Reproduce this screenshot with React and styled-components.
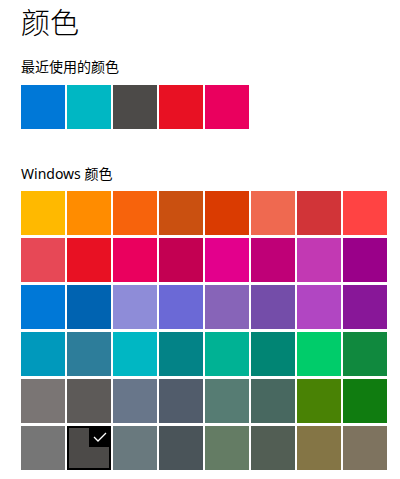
import styled, { createGlobalStyle } from "styled-components";

const GlobalStyle = createGlobalStyle`
  html, body {
    margin: 0;
    padding: 0;
    background: #ffffff;
  }
  body {
    font-family: "Noto Sans", "Noto Sans CJK SC", sans-serif;
    color: #000000;
  }
`;

const recentColors = ["#0078D7", "#00B7C3", "#4C4A48", "#E81123", "#EA005E"];

const windowsColors = [
  "#FFB900", "#FF8C00", "#F7630C", "#CA5010", "#DA3B01", "#EF6950", "#D13438", "#FF4343",
  "#E74856", "#E81123", "#EA005E", "#C30052", "#E3008C", "#BF0077", "#C239B3", "#9A0089",
  "#0078D7", "#0063B1", "#8E8CD8", "#6B69D6", "#8764B8", "#744DA9", "#B146C2", "#881798",
  "#0099BC", "#2D7D9A", "#00B7C3", "#038387", "#00B294", "#018574", "#00CC6A", "#10893E",
  "#7A7574", "#5D5A58", "#68768A", "#515C6B", "#567C73", "#486860", "#498205", "#107C10",
  "#767676", "#4C4A48", "#69797E", "#4A5459", "#647C64", "#525E54", "#847545", "#7E735F",
];

const SELECTED = 41;

const App = () => {
  return (
    <Page>
      <GlobalStyle />
      <Title>颜色</Title>

      <SectionLabel>最近使用的颜色</SectionLabel>
      <RecentRow>
        {recentColors.map((c, i) => (
          <Swatch key={i} $color={c} />
        ))}
      </RecentRow>

      <SectionLabel $top={35} $height={27}>Windows 颜色</SectionLabel>
      <ColorGrid>
        {windowsColors.map((c, i) =>
          i === SELECTED ? (
            <SelectedSwatch key={i} $color={c}>
              <CheckCorner>
                <svg width="14" height="10" viewBox="0 0 14 10">
                  <polyline
                    points="1,5 5,9 13,1"
                    fill="none"
                    stroke="#ffffff"
                    strokeWidth="1.3"
                  />
                </svg>
              </CheckCorner>
            </SelectedSwatch>
          ) : (
            <Swatch key={i} $color={c} />
          )
        )}
      </ColorGrid>
    </Page>
  );
};

export default App;

const Page = styled.div`
  padding: 0 21px 10px;
  width: 400px;
  box-sizing: border-box;
`;

const Title = styled.h1`
  margin: 0;
  padding-top: 3px;
  font-family: "Noto Sans CJK SC", sans-serif;
  font-weight: 300;
  font-size: 29px;
  line-height: 36px;
  height: 46px;
`;

const SectionLabel = styled.div`
  margin-top: ${(p) => p.$top || 8}px;
  font-size: 14px;
  line-height: 20px;
  height: ${(p) => p.$height || 28}px;
  font-family: "Noto Sans", "Noto Sans CJK SC", sans-serif;
`;

const RecentRow = styled.div`
  display: flex;
  gap: 2px;
`;

const Swatch = styled.div`
  width: 44px;
  height: 44px;
  background: ${(p) => p.$color};
`;

const SelectedSwatch = styled(Swatch)`
  position: relative;
  box-sizing: border-box;
  border: 2px solid #000000;
`;

const CheckCorner = styled.div`
  position: absolute;
  top: -2px;
  right: -2px;
  width: 22px;
  height: 21px;
  background: #000000;
  display: flex;
  align-items: center;
  justify-content: center;
`;

const ColorGrid = styled.div`
  display: grid;
  grid-template-columns: repeat(8, 44px);
  grid-auto-rows: 44px;
  column-gap: 2px;
  row-gap: 3px;
`;
